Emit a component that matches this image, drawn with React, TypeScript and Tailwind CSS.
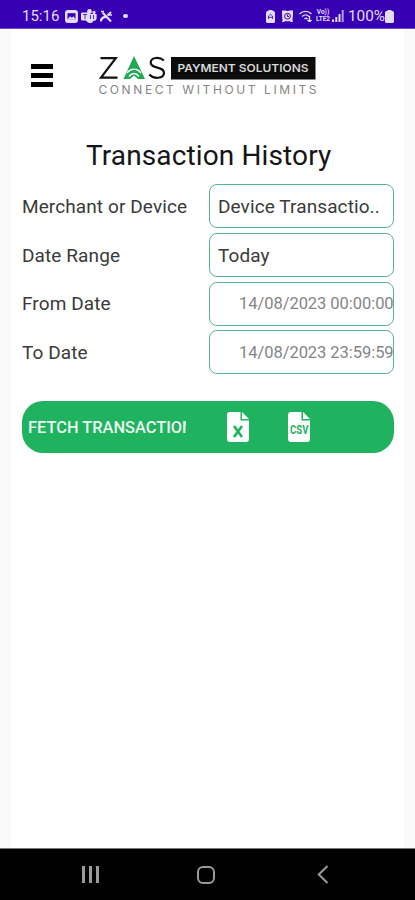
import type { ReactNode } from 'react'

function StatusBar() {
  return (
    <header className="flex h-[29px] shrink-0 items-center border-b border-[#6a4fc4] bg-[#3700b3] pt-[4px] pr-[21px] pl-[22px] text-[#e4dcfa]">
      <span className="w-[38px] text-[15px] leading-4 whitespace-nowrap">15:16</span>
      <div className="ml-[5px] flex items-center gap-[3px]">
        {/* Gallery */}
        <svg width="13" height="13" viewBox="0 0 13 13">
          <rect width="13" height="13" rx="3" fill="currentColor" />
          <path d="M2.5 3.2h8v6h-8z" fill="#3700b3" />
          <path d="M2.5 9.2l2.6-3 1.8 1.6 1.6-1.5 2 2.9z" fill="currentColor" />
        </svg>
        {/* Teams */}
        <svg width="16" height="14" viewBox="0 0 16 14" fill="currentColor">
          <circle cx="8.5" cy="2.5" r="2.4" />
          <circle cx="13" cy="3.4" r="1.6" />
          <path d="M5 5h10.6v4.2a2.6 2.6 0 0 1-3 2.6A4 4 0 0 1 5 10z" />
          <rect y="3.5" width="8" height="8" rx="1" />
          <path d="M2 5.5h4M4 5.5v4.5M9.5 6v4M12.5 6v4" stroke="#3700b3" strokeWidth=".8" />
        </svg>
        {/* Missed call */}
        <svg width="13" height="13" viewBox="0 0 13 13" fill="none" stroke="currentColor" strokeWidth="2">
          <path d="M2.5 2.5l8.5 9M11 2L7.5 5.5" />
          <path d="M.5 11.5C1.5 8 4 6.500 7 7" strokeWidth="2.4" />
          <path d="M1 1.5h3M9 5h3" strokeWidth="1.4" />
        </svg>
      </div>
      <span className="ml-[10px] size-[4.5px] rounded-full bg-current" />

      <div className="ml-auto flex items-center">
        {/* Battery saver */}
        <svg width="9" height="13" viewBox="0 0 9 13">
          <path d="M2.5 1V0h4v1H8l1 1.5V12l-1 1H1l-1-1V2.5L1 1z" fill="currentColor" />
          <path d="M2.5 9V6l2-1.800 2 1.800v3M2.5 7.300h4" fill="none" stroke="#3700b3" strokeWidth=".8" />
        </svg>
        {/* Alarm */}
        <svg className="ml-[7px]" width="11" height="12" viewBox="0 0 11 12">
          <path d="M0 .5h3L5.5 1 8 .5h3V4l-.5 6.5.5 1.5H9l-1-.8H3L2 12H0l.5-1.5L0 4z" fill="currentColor" />
          <circle cx="5.5" cy="6.2" r="2.9" fill="none" stroke="#3700b3" strokeWidth="1" />
          <path d="M5.5 4.5v2H7" fill="none" stroke="#3700b3" />
        </svg>
        {/* Wifi */}
        <svg className="ml-[6px]" width="15" height="12" viewBox="0 0 15 12" fill="none" stroke="currentColor" strokeWidth="1.4">
          <path d="M.5 4C4 .5 9 .5 12.5 4M3 6.5c2.300-2 5-2 7 0M5.5 9c1-.9 2-.9 3 0M10.5 6v5.500M8.5 10l2 1.700 2-1.700" />
        </svg>
        <span className="ml-px flex w-[16px] flex-col items-center text-[6.5px] leading-[7px] font-bold">
          <span>Vo))</span>
          <span>LTE2</span>
        </span>
        <svg className="ml-px" width="12" height="12" viewBox="0 0 12 12" fill="currentColor">
          <path d="M0 9.5h2V12H0zM3.3 7h2v5h-2zM6.5 4h2v8h-2z" />
          <path d="M9.7 0h2v12h-2z" opacity=".7" />
        </svg>
        <span className="ml-[4px] w-[37px] text-[15.3px] leading-4 whitespace-nowrap">100%</span>
        <svg width="9" height="13" viewBox="0 0 9 13" fill="currentColor">
          <path d="M2.5 0h4v1H8l1 1.5V12l-1 1H1l-1-1V2.5L1 1h1.5z" />
        </svg>
      </div>
    </header>
  )
}

function Logo() {
  return (
    <svg width="222" height="42" viewBox="0 0 222 42" role="img" aria-label="ZAS Payment Solutions" fontFamily="Inter, sans-serif">
      <path d="M2.5 4.2H17.8L3 23.7H19.500" fill="none" stroke="#111" strokeWidth="2.2" />
      {/* Green A */}
      <path d="M36 2L47 25H40L36 21.5 32 25H25.500z" fill="#1fa950" />
      <path d="M29 19c4-5 10-5 14 0M31 22.5c3-4 7-4 10 0" fill="none" stroke="#fff" strokeWidth="1.5" />
      <path d="M65.8 6.500C62 2.800 53 2.800 52.700 8.500c0 6.700 13.300 3.600 13.300 10.300 0 6-10.300 6.600-14.700 1.700" fill="none" stroke="#111" strokeWidth="2.2" />
      <rect x="73" y="3" width="144.5" height="22.5" fill="#0c0c0c" />
      <text x="79.5" y="18" fontSize="10.8" fontWeight="600" fill="#d8d8d8" textLength="131" lengthAdjust="spacingAndGlyphs">PAYMENT SOLUTIONS</text>
      <text x="0.5" y="39.5" fontSize="12" fill="#858585" textLength="218" lengthAdjust="spacing">CONNECT WITHOUT LIMITS</text>
    </svg>
  )
}

function Row({ label, children }: { label: string; children: ReactNode }) {
  return (
    <div className="flex h-[44px] items-center">
      <span className="w-[187px] shrink-0 pt-[2px] text-[19px] tracking-[0.1px] whitespace-nowrap text-[#3a3a3a]">{label}</span>
      <div className="flex h-[44px] w-[185px] items-center overflow-hidden rounded-[8px] border border-[#55b78c] pt-[2px] whitespace-nowrap">
        {children}
      </div>
    </div>
  )
}

function ExcelIcon() {
  return (
    <svg width="22" height="30" viewBox="0 0 22 30">
      <path d="M3 0H13.5V8.5H22V27a3 3 0 0 1-3 3H3a3 3 0 0 1-3-3V3a3 3 0 0 1 3-3z" fill="#fff" />
      <path d="M15 0l7 7h-7z" fill="#fff" />
      <path d="M7 14l8 11M15 14L7 25" stroke="#1fb25f" strokeWidth="2.6" />
    </svg>
  )
}

function CsvIcon() {
  return (
    <svg width="22" height="30" viewBox="0 0 22 30">
      <path d="M3 0H13.5V8.5H22V27a3 3 0 0 1-3 3H3a3 3 0 0 1-3-3V3a3 3 0 0 1 3-3z" fill="#fff" />
      <path d="M15 0l7 7h-7z" fill="#fff" />
      <text x="2" y="22" fontSize="12" fontWeight="700" fill="#1fb25f" textLength="18.5" lengthAdjust="spacingAndGlyphs">CSV</text>
    </svg>
  )
}

export default function App() {
  return (
    <div className="flex h-[900px] w-[415px] flex-col overflow-hidden bg-[#fafafa] font-[Roboto,sans-serif]">
      <StatusBar />

      <main className="mx-[11px] flex grow flex-col bg-white pl-[11px]">
        <div className="flex items-start pt-[25px]">
          <button className="mt-[9.5px] ml-[9px] flex w-[22px] flex-col gap-[4px]" aria-label="Menu">
            <span className="h-[5px] w-full bg-black" />
            <span className="h-[5px] w-full bg-black" />
            <span className="h-[5px] w-full bg-black" />
          </button>
          <div className="ml-[45px]">
            <Logo />
          </div>
        </div>

        <h1 className="mt-[43px] ml-[64px] text-[28px] leading-[34px] tracking-[0.12px] whitespace-nowrap text-[#151515]">
          Transaction History
        </h1>

        <div className="mt-[11px] flex flex-col gap-[4.8px]">
          <Row label="Merchant or Device">
            <span className="pl-[8px] text-[19px] tracking-[0.1px] text-[#3a3a3a]">Device Transactio..</span>
          </Row>
          <Row label="Date Range">
            <span className="pl-[8px] text-[19px] tracking-[0.1px] text-[#3a3a3a]">Today</span>
          </Row>
          <Row label="From Date">
            <span className="pl-[29px] text-[16.5px] tracking-[-0.05px] text-[#858585]">14/08/2023 00:00:00</span>
          </Row>
          <Row label="To Date">
            <span className="pl-[29px] text-[16.5px] tracking-[-0.05px] text-[#858585]">14/08/2023 23:59:59</span>
          </Row>
        </div>

        <div className="mt-[27px] flex h-[52px] w-[372px] items-center rounded-[21px] bg-[#1fb25f]">
          <button className="ml-[6px] w-[158px] overflow-hidden pt-[2px] text-left text-[16.4px] font-medium whitespace-nowrap text-[#e9f9ef]">
            FETCH TRANSACTIONS
          </button>
          <button className="ml-[41px]" aria-label="Export to Excel">
            <ExcelIcon />
          </button>
          <button className="ml-[39px]" aria-label="Export to CSV">
            <CsvIcon />
          </button>
        </div>
      </main>

      <nav className="flex h-[52px] shrink-0 items-center border-t border-[#777] bg-black text-[#9a9a9a]">
        <div className="ml-[82px] flex h-[17px] w-[17px] justify-between">
          <span className="w-[3px] bg-current" />
          <span className="w-[3px] bg-current" />
          <span className="w-[3px] bg-current" />
        </div>
        <div className="ml-[98px] h-[18px] w-[18px] rounded-[6px] border-2 border-current" />
        <svg className="ml-[102px]" width="12" height="19" viewBox="0 0 12 19" fill="none" stroke="currentColor" strokeWidth="2">
          <path d="M10.5 1L1.800 9.500l8.700 8.500" />
        </svg>
      </nav>
    </div>
  )
}
